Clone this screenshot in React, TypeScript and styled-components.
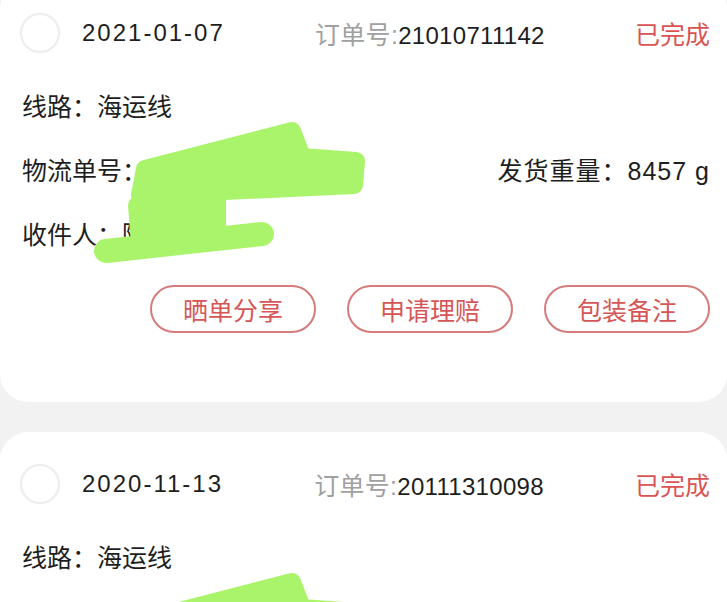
import React from "react";
import styled, { createGlobalStyle } from "styled-components";

interface Order {
	date: string;
	orderNo: string;
	status: string;
	route: string;
	trackingNo?: string;
	weight?: string;
	receiver?: string;
}

// the second order is only partly on screen: its lower rows are scrolled away
const orders: Order[] = [
	{ date: "2021-01-07", orderNo: "21010711142", status: "已完成", route: "海运线", trackingNo: "CN2101070027UD", weight: "8457 g", receiver: "陈先生" },
	{ date: "2020-11-13", orderNo: "20111310098", status: "已完成", route: "海运线" },
];

const actions = ["晒单分享", "申请理赔", "包装备注"];

export default function App() {
	return (
		<>
			<GlobalStyle />
			<List>
				{orders.map((order) => (
					<OrderCard key={order.orderNo} order={order} />
				))}
			</List>
		</>
	);
}

function OrderCard({ order }: { order: Order }) {
	const full = !!order.trackingNo;
	return (
		<Card full={full}>
			<Header>
				<DateGroup>
					<Check />
					<DateText>{order.date}</DateText>
				</DateGroup>
				<OrderNo>
					<Label>订单号:</Label>
					{order.orderNo}
				</OrderNo>
				<Status>{order.status}</Status>
			</Header>
			<Info>
				<InfoRow>
					<span>线路：{order.route}</span>
				</InfoRow>
				{full && (
					<>
						<InfoRow>
							<span>
								物流单号：<Tracking>{order.trackingNo}</Tracking>
							</span>
							<span>发货重量：{order.weight}</span>
						</InfoRow>
						<InfoRow>
							<span>收件人：{order.receiver}</span>
						</InfoRow>
					</>
				)}
			</Info>
			{full && (
				<Actions>
					{actions.map((a) => (
						<ActionButton key={a}>{a}</ActionButton>
					))}
				</Actions>
			)}
			<Scribble viewBox="0 0 727 300" width="727" height="300">
				<g stroke="#a9f46b" strokeLinecap="round" strokeLinejoin="round" fill="#a9f46b">
					<path d="M145 188 L292 150 L302 176 L356 180 L354 204 L140 214 Z" strokeWidth="18" />
					<path d="M136 224 L218 218 L218 250 L138 252 Z" strokeWidth="16" />
					<path d="M106 270 L262 253" strokeWidth="24" fill="none" />
				</g>
			</Scribble>
		</Card>
	);
}

const GlobalStyle = createGlobalStyle`
	html, body {
		margin: 0;
		padding: 0;
		overflow: hidden;
		background: #f2f2f2;
		font-family: "Liberation Sans", "Noto Sans CJK SC", sans-serif;
	}
`;

const List = styled.div`
	display: flex;
	flex-direction: column;
	gap: 30px;
	margin-top: -19px;
`;

const Card = styled.div<{ full: boolean }>`
	position: relative;
	background: #fff;
	border-radius: 28px;
	padding: 32px 17px ${(p) => (p.full ? "69px" : "120px")} 20px;
	overflow: hidden;
`;

const Header = styled.div`
	height: 40px;
	display: flex;
	align-items: center;
	justify-content: space-between;
	font-size: 24px;
	color: #1e1e1e;
`;

const DateGroup = styled.div`
	display: flex;
	align-items: center;
	gap: 22px;
`;

const Check = styled.span`
	width: 36px;
	height: 36px;
	border: 2px solid #ededed;
	border-radius: 50%;
`;

const DateText = styled.span`
	letter-spacing: 2px;
`;

const OrderNo = styled.span`
	letter-spacing: 0.3px;
`;

const Label = styled.span`
	color: #a0a0a0;
	font-size: 25px;
`;

const Status = styled.span`
	color: #d95454;
	font-size: 25px;
`;

const Info = styled.div`
	margin-top: 20px;
	padding-left: 2px;
	display: flex;
	flex-direction: column;
`;

const InfoRow = styled.div`
	height: 64px;
	display: flex;
	align-items: center;
	justify-content: space-between;
	font-size: 25px;
	color: #1e1e1e;

	& > span + span {
		letter-spacing: 1px;
	}
`;

const Tracking = styled.span`
	color: #3b8fe0;
`;

const Actions = styled.div`
	margin-top: 20px;
	display: flex;
	justify-content: flex-end;
	gap: 31px;
`;

const ActionButton = styled.button`
	width: 166px;
	height: 48px;
	border: 2px solid #d67a7a;
	border-radius: 24px;
	background: #fff;
	color: #d65656;
	font-family: "Liberation Sans", "Noto Sans CJK SC", sans-serif;
	font-size: 25px;
	padding: 0;
`;

const Scribble = styled.svg`
	position: absolute;
	left: 0;
	top: 0;
	pointer-events: none;
`;
